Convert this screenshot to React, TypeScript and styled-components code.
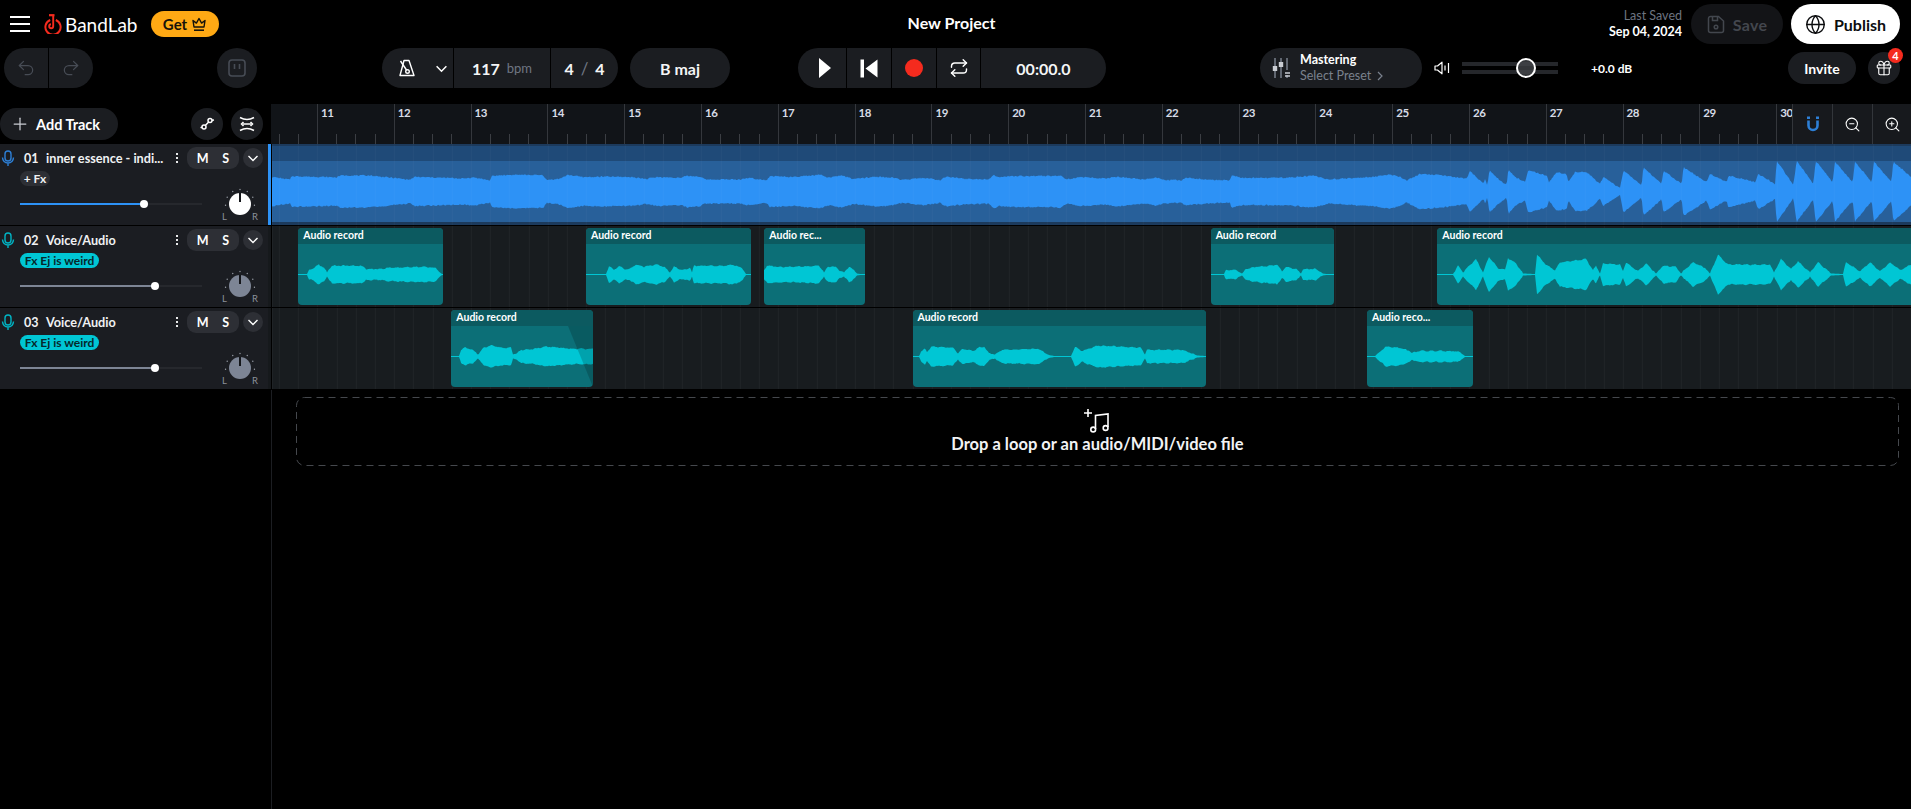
import * as React from "react";
import styled, { createGlobalStyle } from "styled-components";
import { Gift, Globe, Plus, Redo2, Repeat, Undo2, ZoomIn, ZoomOut } from "lucide-react";

const GlobalStyle = createGlobalStyle`
  html, body {
    margin: 0;
    padding: 0;
    background: #000;
    color: #fff;
    font-family: Lato, "Noto Sans", sans-serif;
  }
  * { box-sizing: border-box; }
`;

const BEAT = 19.2;
const BAR = BEAT * 4;
const FIRST_BAR_OFFSET = 45.3;

const Page = styled.div`
  width: 1911px;
  height: 809px;
  overflow: hidden;
  display: flex;
  flex-direction: column;
  background: #000;
`;

/* ---- top bar ---- */
const TopBar = styled.header`
  height: 48px;
  display: grid;
  grid-template-columns: 1fr auto 1fr;
  align-items: center;
  padding: 0 11px 0 10px;
`;

const BrandGroup = styled.div`
  display: flex;
  align-items: center;
`;

const Hamburger = styled.div`
  width: 20px;
  height: 16px;
  display: flex;
  flex-direction: column;
  justify-content: space-between;
  margin-right: 14px;
  span {
    display: block;
    height: 2px;
    background: #fff;
  }
`;

const BrandName = styled.span`
  font-size: 19px;
  font-weight: 400;
  margin-left: 3px;
  margin-right: 13px;
`;

const GetButton = styled.div`
  width: 68px;
  height: 26px;
  border-radius: 13px;
  background: #ffa914;
  color: #15120a;
  font-size: 15px;
  font-weight: 700;
  display: flex;
  align-items: center;
  justify-content: center;
  gap: 5px;
`;

const ProjectTitle = styled.div`
  font-size: 16px;
  font-weight: 700;
  margin: 0 7px 3px 0;
`;

const SaveGroup = styled.div`
  display: flex;
  align-items: center;
  justify-content: flex-end;
`;

const LastSaved = styled.div`
  text-align: right;
  font-size: 12.5px;
  font-weight: 700;
  line-height: 16px;
  margin-right: 9px;
  span {
    display: block;
    color: #6d7480;
    font-weight: 400;
  }
`;

const SaveButton = styled.div`
  width: 92px;
  height: 40px;
  border-radius: 20px;
  background: #131417;
  color: #43474e;
  font-size: 16px;
  letter-spacing: 0.3px;
  font-weight: 700;
  display: flex;
  align-items: center;
  justify-content: center;
  gap: 8px;
  margin-right: 8px;
`;

const PublishButton = styled.div`
  width: 109px;
  height: 40px;
  border-radius: 20px;
  background: #fff;
  color: #0c0d0f;
  font-size: 16px;
  font-weight: 700;
  display: flex;
  align-items: center;
  justify-content: center;
  gap: 8px;
`;

/* ---- transport toolbar ---- */
const Toolbar = styled.div`
  height: 40px;
  display: flex;
  align-items: center;
  padding: 0 11px 0 4px;
  margin-bottom: 16px;
`;

const Pill = styled.div<{ $ml?: number }>`
  height: 40px;
  display: flex;
  align-items: stretch;
  border-radius: 20px;
  background: #1b1d21;
  overflow: hidden;
  margin-left: ${(p) => p.$ml ?? 0}px;
  flex: none;
`;

const PillCell = styled.div<{ $w: number; $last?: boolean }>`
  width: ${(p) => p.$w}px;
  display: flex;
  align-items: center;
  justify-content: center;
  gap: 7px;
  border-right: ${(p) => (p.$last ? "none" : "1px solid #000")};
  font-size: 16px;
  font-weight: 700;
  color: #f4f5f6;
`;

const MetronomeCell = styled(PillCell)`
  justify-content: flex-start;
  padding-left: 16px;
  gap: 19px;
`;

const PlayCell = styled(PillCell)`
  padding-left: 6px;
`;

const Dim = styled.span`
  color: #6f7683;
  font-size: 13px;
  font-weight: 400;
`;

const Slash = styled(Dim)`
  font-size: 17px;
`;

const MasteringPill = styled(Pill)`
  width: 162px;
  padding-left: 12px;
  align-items: center;
  gap: 8px;
`;

const MasteringText = styled.div`
  font-size: 12.5px;
  font-weight: 700;
  line-height: 16px;
`;

const PresetLine = styled.span`
  display: flex;
  align-items: center;
  gap: 6px;
  color: #7a818d;
  font-weight: 400;
`;

const VolumeGroup = styled.div`
  display: flex;
  align-items: center;
  margin-left: 12px;
`;

const VolumeTrack = styled.div`
  position: relative;
  width: 96px;
  height: 12px;
  margin-left: 11px;
  border-top: 4px solid #25272b;
  border-bottom: 4px solid #25272b;
`;

const VolumeThumb = styled.div`
  position: absolute;
  left: 54px;
  top: -8px;
  width: 20px;
  height: 20px;
  border-radius: 50%;
  border: 2px solid #fff;
  background: rgba(70, 72, 76, 0.75);
`;

const DbLabel = styled.span`
  font-size: 12px;
  font-weight: 700;
  margin-left: 33px;
`;

const RightActions = styled.div`
  margin-left: auto;
  display: flex;
  align-items: center;
`;

const InviteButton = styled.div`
  width: 68px;
  height: 32px;
  border-radius: 16px;
  background: #1b1d21;
  font-size: 14px;
  font-weight: 700;
  display: flex;
  align-items: center;
  justify-content: center;
`;

const RoundButton = styled.div<{ $size?: number; $dim?: boolean }>`
  position: relative;
  width: ${(p) => p.$size ?? 32}px;
  height: ${(p) => p.$size ?? 32}px;
  border-radius: 50%;
  background: #1b1d21;
  color: ${(p) => (p.$dim ? "#474c55" : "#fff")};
  display: flex;
  align-items: center;
  justify-content: center;
  flex: none;
`;

const GiftButton = styled(RoundButton)`
  margin-left: 12px;
`;

const Badge = styled.span`
  position: absolute;
  top: -4px;
  right: -3px;
  width: 15px;
  height: 15px;
  border-radius: 50%;
  background: #f52b1e;
  font-size: 11px;
  font-weight: 700;
  display: flex;
  align-items: center;
  justify-content: center;
`;

const PauseSlot = styled(RoundButton)`
  margin-left: 124px;
  width: 40px;
  height: 40px;
`;

/* ---- ruler row ---- */
const RulerRow = styled.div`
  height: 40px;
  display: flex;
`;

const RulerSide = styled.div`
  width: 271px;
  display: flex;
  align-items: center;
  padding-right: 8px;
  gap: 8px;
`;

const AddTrackButton = styled.div`
  width: 118px;
  height: 32px;
  border-radius: 16px;
  background: #1b1d21;
  display: flex;
  align-items: center;
  padding-left: 10px;
  gap: 6px;
  font-size: 14.5px;
  font-weight: 700;
  margin-right: auto;
`;

const Ruler = styled.div`
  position: relative;
  flex: 1;
  display: flex;
  overflow: hidden;
  background: #111418;
`;

const tickFill = "linear-gradient(#3b3e43, #3b3e43)";

const LeadIn = styled.div`
  flex: none;
  width: 46px;
  background-image: ${tickFill}, ${tickFill};
  background-size: 1px 10px;
  background-repeat: no-repeat;
  background-position: ${46 - BEAT * 2}px bottom, ${46 - BEAT}px bottom;
`;

const BarCell = styled.div`
  flex: none;
  width: ${BAR}px;
  border-left: 1px solid #34373c;
  padding: 2px 0 0 3px;
  font-size: 11.5px;
  font-weight: 700;
  letter-spacing: -0.4px;
  color: #d7dce6;
  background-image: ${tickFill}, ${tickFill}, ${tickFill};
  background-size: 1px 10px;
  background-repeat: no-repeat;
  background-position: ${BEAT - 1}px bottom, ${BEAT * 2 - 1}px bottom, ${BEAT * 3 - 1}px bottom;
`;

const RulerTools = styled.div`
  position: absolute;
  right: 0;
  top: 0;
  bottom: 0;
  display: flex;
  background: #17191d;
`;

const RulerTool = styled.div<{ $blue?: boolean }>`
  width: 40px;
  display: flex;
  align-items: center;
  justify-content: center;
  border-left: 1px solid #33363b;
  color: ${(p) => (p.$blue ? "#2d7fd6" : "#fff")};
  &:last-child {
    width: 39px;
  }
`;

/* ---- tracks ---- */
const TrackRow = styled.div`
  height: 81px;
  margin-bottom: 1px;
  display: flex;
`;

const TrackHead = styled.div<{ $accent?: boolean }>`
  width: 271px;
  margin-right: 1px;
  flex: none;
  background: #1b1d22;
  padding-top: 3px;
  border-right: 3px solid ${(p) => (p.$accent ? "#2d92f6" : "#16191c")};
`;

const HeadLine = styled.div`
  height: 22px;
  display: flex;
  align-items: center;
  padding-left: 1px;
`;

const MicSlot = styled.div<{ $color: string }>`
  width: 14px;
  display: flex;
  justify-content: center;
  color: ${(p) => p.$color};
  margin-right: 9px;
`;

const TrackNo = styled.span`
  width: 22px;
  font-size: 12.5px;
  font-weight: 700;
  color: #f0f1f3;
`;

const TrackName = styled.span`
  width: 126px;
  font-size: 12.7px;
  font-weight: 700;
  color: #f0f1f3;
  white-space: nowrap;
`;

const Kebab = styled.div`
  width: 10px;
  display: flex;
  flex-direction: column;
  align-items: center;
  gap: 2px;
  margin-right: 5px;
  i {
    width: 2px;
    height: 2px;
    background: #e8e9ea;
    display: block;
  }
`;

const MuteSolo = styled.div`
  width: 52px;
  height: 22px;
  border-radius: 9px;
  background: #2d2f35;
  display: flex;
  align-items: center;
  justify-content: space-around;
  padding: 0 3px;
  font-size: 12.5px;
  font-weight: 700;
`;

const Collapse = styled.div`
  width: 20px;
  height: 20px;
  margin-left: 4px;
  border-radius: 50%;
  background: #2d2f35;
  display: flex;
  align-items: center;
  justify-content: center;
`;

const FxChip = styled.div<{ $active?: boolean }>`
  height: 15.5px;
  width: ${(p) => (p.$active ? 79 : 30)}px;
  margin: 1.5px 0 0 20px;
  border-radius: 8px;
  background: ${(p) => (p.$active ? "#00c6d4" : "#2d2f35")};
  color: ${(p) => (p.$active ? "#06282c" : "#f0f1f3")};
  font-size: 12px;
  font-weight: 700;
  text-align: center;
  line-height: 15px;
  white-space: nowrap;
`;

const MixLine = styled.div`
  height: 36px;
  display: flex;
  align-items: center;
  padding-left: 20px;
`;

const Fader = styled.div`
  position: relative;
  width: 182px;
  height: 2px;
  background: #26282d;
`;

const FaderFill = styled.div<{ $pos: number; $color: string }>`
  width: ${(p) => p.$pos}px;
  height: 100%;
  background: ${(p) => p.$color};
`;

const FaderThumb = styled.div<{ $pos: number }>`
  position: absolute;
  top: -3px;
  left: ${(p) => p.$pos - 4}px;
  width: 8px;
  height: 8px;
  border-radius: 50%;
  background: #fff;
`;

const KnobWrap = styled.div`
  position: relative;
  width: 36px;
  height: 36px;
  margin-left: 20px;
  display: flex;
  align-items: center;
  justify-content: center;
`;

const KnobTicks = styled.svg`
  position: absolute;
  inset: 0;
`;

const KnobDial = styled.div<{ $color: string }>`
  position: relative;
  width: 22px;
  height: 22px;
  border-radius: 50%;
  background: ${(p) => p.$color};
  &::after {
    content: "";
    position: absolute;
    left: 10px;
    top: 0;
    width: 2px;
    height: 9px;
    background: #14161a;
  }
`;

const KnobSide = styled.span<{ $side: "left" | "right" }>`
  position: absolute;
  bottom: 0;
  ${(p) => p.$side}: 0;
  font-size: 9.5px;
  line-height: 10px;
  color: #8c919a;
`;

const Lane = styled.div`
  position: relative;
  flex: 1;
  overflow: hidden;
  background-color: #181c1f;
  background-image: repeating-linear-gradient(
    to right,
    rgba(255, 255, 255, 0.035) 0 1px,
    transparent 1px ${BEAT}px
  );
  background-position-x: ${FIRST_BAR_OFFSET % BEAT}px;
`;

const GridVeil = styled.div`
  position: absolute;
  inset: 0;
  pointer-events: none;
  background-image: repeating-linear-gradient(
    to right,
    rgba(255, 255, 255, 0.025) 0 1px,
    transparent 1px ${BEAT}px
  );
  background-position-x: ${FIRST_BAR_OFFSET % BEAT}px;
`;

const FullRegion = styled.div`
  height: 100%;
  display: flex;
  flex-direction: column;
  background: #1c3a5c;
  padding: 2px 0 3px;
`;

const FullRegionTop = styled.div`
  height: 16px;
  background: #1f4a78;
`;

const FullRegionBody = styled.div`
  flex: 1;
  background: #28609a;
`;

const Clip = styled.div<{ $x: number; $w: number }>`
  position: absolute;
  left: ${(p) => p.$x}px;
  top: 2px;
  width: ${(p) => p.$w}px;
  height: 77px;
  border-radius: 4px;
  overflow: hidden;
  background: #0c6f77;
`;

const ClipTitle = styled.div`
  height: 16px;
  background: #0c5a60;
  color: #fff;
  font-size: 10.5px;
  font-weight: 700;
  padding-left: 5px;
  line-height: 15px;
  white-space: nowrap;
`;

const Fade = styled.svg`
  position: absolute;
  right: 0;
  top: 16px;
`;

const WaveSvg = styled.svg`
  display: block;
`;

/* ---- empty area ---- */
const LowerArea = styled.div`
  flex: 1;
  display: flex;
`;

const LowerSide = styled.div`
  width: 272px;
  border-right: 1px solid #1c1e22;
`;

const DropZone = styled.div`
  position: relative;
  width: 1603px;
  height: 69px;
  margin: 7px 0 0 24px;
  display: flex;
  flex-direction: column;
  align-items: center;
  justify-content: flex-start;
  padding-top: 11px;
  font-size: 16.5px;
  font-weight: 700;
  color: #f2f3f4;
`;

const DropOutline = styled.svg`
  position: absolute;
  inset: 0;
`;

/* ---- waveforms ---- */
type Anchor = [number, number];

const noise = (i: number, seed: number) => {
  const s = Math.sin(i * 12.9898 + seed * 78.233) * 43758.5453;
  return s - Math.floor(s);
};

const interp = (anchors: Anchor[], x: number) => {
  for (let i = 1; i < anchors.length; i++) {
    if (x <= anchors[i][0]) {
      const [x0, h0] = anchors[i - 1];
      const [x1, h1] = anchors[i];
      return h0 + (h1 - h0) * ((x - x0) / (x1 - x0 || 1));
    }
  }
  return anchors[anchors.length - 1][1];
};

const wavePoints = (width: number, center: number, fn: (x: number) => number, jitter: number, seed: number) => {
  const top: string[] = [];
  const bottom: string[] = [];
  for (let x = 0; x <= width; x++) {
    const h = fn(x);
    const amt = h > 2 ? jitter : 0;
    top.push(`${x},${(center - h - (noise(x, seed) - 0.5) * amt).toFixed(1)}`);
    bottom.unshift(`${x},${(center + h + (noise(x, seed + 3) - 0.5) * amt).toFixed(1)}`);
  }
  return [...top, ...bottom].join(" ");
};

const ClipWave = ({ anchors, width, seed }: { anchors: Anchor[]; width: number; seed: number }) => {
  const envelope = (x: number) => {
    const h = interp(anchors, x);
    return h > 2 ? h * 1.1 + 0.4 * Math.sin(x * 0.7 + seed) : h;
  };
  return (
    <WaveSvg width={width} height={61}>
      <polygon points={wavePoints(width, 30.5, envelope, 0.8, seed)} fill="#00c6d4" />
    </WaveSvg>
  );
};

const LANE_W = 1639;

// envelope of the mixdown: [x in lane, half height], read off crop rows
const fromCrop = (x0: number, mid: number, rows: number[][]): Anchor[] =>
  rows.map(([px, y]) => [x0 + px / 3 - 272, (mid - y) / 3]);

// the steady part of the song sits flatter than the raw readings
const flatten = (rows: Anchor[]): Anchor[] => rows.map(([x, h]) => [x, 14.5 + (h - 14.5) * 0.7]);

const masterAnchors: Anchor[] = [
  ...flatten(fromCrop(260, 272, [
    [36, 228], [90, 240], [95, 225], [230, 230], [240, 222], [330, 222], [450, 240], [465, 228],
    [610, 235], [640, 230], [690, 243], [695, 225],
  ])),
  ...flatten(fromCrop(500, 95, [
    [0, 44], [50, 42], [130, 44], [140, 65], [180, 58], [205, 42], [250, 52], [320, 50], [400, 52],
    [437, 60], [470, 52], [545, 55], [560, 46], [600, 50], [615, 62], [720, 62], [745, 55], [800, 65],
    [810, 47], [880, 52], [960, 42], [985, 55], [1025, 45], [1060, 60], [1130, 50], [1180, 55],
    [1210, 65], [1270, 55], [1320, 65], [1340, 50], [1400, 60], [1465, 62], [1480, 42],
  ])),
  ...flatten(fromCrop(1000, 95, [
    [0, 52], [30, 48], [160, 47], [180, 44], [200, 62], [240, 52], [320, 58], [350, 50], [430, 62],
    [470, 54], [490, 63], [545, 66], [555, 55], [640, 64], [690, 65], [695, 42], [720, 55], [860, 55],
    [940, 45], [985, 63], [1060, 55], [1130, 50], [1165, 40], [1200, 50],
  ])),
  ...fromCrop(1400, 158, [
    [0, 115], [20, 125], [60, 105], [130, 110], [200, 120], [210, 97], [250, 135], [255, 122], [262, 140],
    [268, 95], [300, 125], [320, 138], [325, 90], [345, 115], [375, 130], [385, 95], [440, 110], [447, 130],
    [470, 100], [500, 105], [505, 130], [525, 100], [560, 100], [600, 135], [610, 115], [660, 148],
    [670, 95], [725, 140], [730, 85], [785, 135], [790, 95], [845, 135], [850, 85], [920, 130],
    [930, 105], [980, 130], [985, 110], [1065, 130], [1075, 105], [1125, 135], [1130, 66], [1180, 138],
    [1190, 66], [1240, 135], [1247, 66], [1298, 130], [1305, 68], [1358, 130], [1365, 68], [1415, 130],
    [1422, 68], [1474, 130], [1480, 68], [1533, 115],
  ]),
];

const MasterWave = () => (
  <WaveSvg width={LANE_W} height={61}>
    <polygon points={wavePoints(LANE_W, 30.5, (x) => interp(masterAnchors, x), 1.3, 7)} fill="#2d92f6" />
  </WaveSvg>
);

const clipsA: { x: number; w: number; title: string; anchors: Anchor[] }[] = [
  {
    x: 298.3, w: 144.4, title: "Audio record",
    anchors: [[0, 0.5], [9, 0.5], [11, 4], [16, 6], [21, 9], [26, 6], [29, 2], [31, 5], [34, 8], [60, 8], [66, 7], [68, 5], [85, 5], [88, 6], [128, 7], [138, 6], [142, 2], [144, 0.5], [145, 0.5]],
  },
  {
    x: 586, w: 164.7, title: "Audio record",
    anchors: [[0, 0.5], [20, 0.5], [23, 8], [28, 4], [33, 8], [38, 5], [44, 5], [50, 9], [58, 7], [70, 9], [78, 7], [84, 2], [88, 7], [93, 5], [98, 4], [104, 6], [106, 2], [108, 8], [140, 8], [146, 9], [156, 6], [160, 0.5], [165, 0.5]],
  },
  {
    x: 764.3, w: 100.4, title: "Audio rec...",
    anchors: [[0, 4], [3, 8], [15, 7], [30, 7], [55, 8], [56, 7], [60, 2], [64, 7], [72, 7], [76, 3], [80, 2], [85, 7], [90, 4], [93, 1], [96, 0.5], [101, 0.5]],
  },
  {
    x: 1210.7, w: 122.9, title: "Audio record",
    anchors: [[0, 0.5], [13, 0.5], [15, 4], [25, 4], [31, 1], [35, 5], [45, 7], [60, 8], [66, 9], [71, 3], [75, 7], [85, 5], [90, 1], [92, 5], [105, 5], [112, 1], [115, 0.5], [123, 0.5]],
  },
  {
    x: 1437.3, w: 480, title: "Audio record",
    anchors: [[0, 0.5], [16, 0.5], [21, 8], [26, 2], [39, 14], [46, 2], [52, 16], [61, 6], [68, 4], [71, 15], [79, 10], [86, 1], [98, 0.5], [100, 18], [109, 9], [118, 4], [123, 11], [149, 14], [156, 4], [159, 8], [163, 1], [166, 10], [183, 9], [186, 3], [189, 11], [201, 3], [209, 10], [219, 1], [226, 8], [239, 7], [244, 1], [256, 11], [268, 6], [273, 1], [281, 18], [291, 9], [313, 9], [333, 9], [337, 2], [344, 14], [354, 5], [361, 12], [373, 2], [381, 11], [394, 1], [406, 0.5], [409, 11], [423, 3], [433, 11], [443, 3], [453, 11], [463, 4], [474, 9]],
  },
];

const clipsB: { x: number; w: number; title: string; anchors: Anchor[]; fade?: boolean }[] = [
  {
    x: 451.3, w: 141.4, title: "Audio record", fade: true,
    anchors: [[0, 0.5], [8, 0.5], [10, 6], [14, 8], [22, 6], [27, 2], [33, 8], [40, 10], [50, 8], [60, 8], [62, 2], [66, 3], [70, 6], [86, 7], [88, 8], [95, 9], [120, 7], [142, 7]],
  },
  {
    x: 912.5, w: 293.2, title: "Audio record",
    anchors: [[0, 0.5], [6, 0.5], [8, 5], [12, 7], [14, 4], [18, 9], [40, 8], [45, 3], [50, 7], [60, 5], [66, 8], [71, 9], [76, 3], [82, 2], [89, 6], [125, 7], [136, 1.5], [141, 0.5], [158, 0.5], [162, 9], [169, 5], [185, 10], [228, 8], [232, 2], [234, 6], [270, 6], [284, 1], [293, 0.5]],
  },
  {
    x: 1367, w: 106.3, title: "Audio reco...",
    anchors: [[0, 0.5], [8, 0.5], [11, 3], [19, 9], [33, 8], [43, 5], [45, 3], [51, 5], [87, 5], [93, 4], [98, 0.5], [107, 0.5]],
  },
];

/* ---- drawn icons ---- */
const BandLabLogo = () => (
  <svg width="18" height="20" viewBox="0 0 18 20" fill="none" stroke="#f52b1e">
    <path d="M5 1.2h5.5" strokeWidth="2.2" />
    <path d="M6.2 6a7.6 7.6 0 1 0 5.6 0" strokeWidth="2" />
    <path d="M9.2 1.5v10.8a2 2 0 1 1-2.2-2" strokeWidth="1.9" />
  </svg>
);

const CrownIcon = () => (
  <svg width="14" height="15" viewBox="0 0 14 15" fill="none" stroke="#15120a" strokeWidth="1.4">
    <path d="M2 10 1 3.5l3.4 2.6L7 1.5l2.6 4.6L13 3.5 12 10Z" strokeLinejoin="round" />
    <path d="M2 13.2h10" strokeWidth="1.6" />
  </svg>
);

const MetronomeIcon = () => (
  <svg width="18" height="18" viewBox="0 0 18 18" fill="none" stroke="#fff" strokeWidth="1.4" strokeLinejoin="round">
    <path d="M6 1.5h5l5 15H2Z" />
    <path d="M2.5 2 9.5 12.5" />
    <circle cx="9.5" cy="12.5" r="1.8" fill="#1b1d21" />
  </svg>
);

const LoopSlotIcon = () => (
  <svg width="20" height="20" viewBox="0 0 20 20" fill="none" stroke="currentColor" strokeWidth="1.6">
    <rect x="2" y="2" width="16" height="16" rx="3" />
    <path d="M7.5 6v5M12.5 6v5" />
  </svg>
);

const FloppyIcon = () => (
  <svg width="18" height="19" viewBox="0 0 18 19" fill="none" stroke="currentColor" strokeWidth="1.5">
    <path d="M3.5 1.5h8l5 4.5v9.5a2 2 0 0 1-2 2h-11a2 2 0 0 1-2-2v-12a2 2 0 0 1 2-2Z" />
    <path d="M5.5 1.5v4h5v-4" />
    <circle cx="9" cy="12" r="1.8" />
  </svg>
);

const PlayIcon = () => (
  <svg width="14" height="20" viewBox="0 0 14 20">
    <path d="M1 0 13 10 1 20Z" fill="#fff" />
  </svg>
);

const BackIcon = () => (
  <svg width="18" height="19" viewBox="0 0 18 19" fill="#fff">
    <rect x="0.5" y="0.5" width="3.5" height="18" />
    <path d="M17.5 0.5v18L5.5 9.5Z" />
  </svg>
);

const RecordDot = styled.div`
  width: 18px;
  height: 18px;
  border-radius: 50%;
  background: #f52b1e;
`;

const MasterSlidersIcon = () => (
  <svg width="20" height="24" viewBox="0 0 20 24" fill="none" strokeWidth="1.5">
    <path d="M3 2v8M3 15v7M9 2v4M9 11v11M15 2v12M15 19v3" stroke="#7a818d" />
    <rect x="0.8" y="10" width="4.4" height="5" fill="#c9ccd2" />
    <rect x="6.8" y="6" width="4.4" height="5" fill="#c9ccd2" />
    <path d="M13 17h5M13 20h5" stroke="#c9ccd2" />
  </svg>
);

const PresetChevron = () => (
  <svg width="6" height="10" viewBox="0 0 6 10" fill="none" stroke="#7a818d" strokeWidth="1.2">
    <path d="M1 1l4 4-4 4" />
  </svg>
);

const SpeakerIcon = () => (
  <svg width="17" height="14" viewBox="0 0 17 14" fill="none" stroke="#fff" strokeWidth="1.2">
    <path d="M1 5h2.5L8 1.2v11.6L3.5 9H1Z" strokeLinejoin="round" />
    <path d="M11 4.5v5M14.5 2v10" />
  </svg>
);

const MagnetIcon = () => (
  <svg width="14" height="16" viewBox="0 0 14 16" fill="none" stroke="currentColor">
    <path d="M2.5 0.5v2.5M11.5 0.5v2.5" strokeWidth="3" />
    <path d="M2.5 4.5V9.5a4.5 4.5 0 0 0 9 0V4.5" strokeWidth="2.6" />
  </svg>
);

const AutomationIcon = () => (
  <svg width="16" height="16" viewBox="0 0 16 16" fill="none" stroke="#fff" strokeWidth="1.5">
    <circle cx="5" cy="11" r="2" />
    <circle cx="11" cy="4.5" r="2" />
    <path d="M6.3 9.5 9.7 6M1.5 11.6 3 11.2M13 4.3 15 4" />
  </svg>
);

const TempoFitIcon = () => (
  <svg width="16" height="16" viewBox="0 0 16 16" fill="none" stroke="#fff" strokeWidth="1.5">
    <path d="M1 1.5Q8 5.5 15 1.5M1 14.5Q8 10.5 15 14.5" />
    <path d="M4 8h8" />
    <path d="M4.5 6 2.5 8l2 2M11.5 6l2 2-2 2" />
  </svg>
);

const ChevronIcon = ({ size = 12 }: { size?: number }) => (
  <svg width={size} height={size} viewBox="0 0 12 12" fill="none" stroke="#fff" strokeWidth="1.4">
    <path d="M1.5 4 6 8.5 10.5 4" />
  </svg>
);

const MicIcon = () => (
  <svg width="14" height="17" viewBox="0 0 14 17" fill="none" stroke="currentColor" strokeWidth="1.4">
    <rect x="4" y="1" width="6" height="10" rx="3" />
    <path d="M1.5 7.5a5.5 5.5 0 0 0 11 0M7 13v3" />
  </svg>
);

const DropIcon = () => (
  <svg width="27" height="26" viewBox="0 0 27 26" fill="none" stroke="#fff" strokeWidth="1.6">
    <path d="M4 1v8M0 5h8" />
    <path d="M11.5 21V7.5L24 6v13" />
    <circle cx="9.2" cy="21.5" r="2.4" />
    <circle cx="21.6" cy="20" r="2.4" />
  </svg>
);

const tickAngles = [-95, -62, -30, 0, 30, 62, 95];

const Knob = ({ color }: { color: string }) => (
  <KnobWrap>
    <KnobTicks width="36" height="36" viewBox="0 0 36 36">
      {tickAngles.map((a) => (
        <circle
          key={a}
          cx={18 + 14.5 * Math.sin((a * Math.PI) / 180)}
          cy={18 - 14.5 * Math.cos((a * Math.PI) / 180)}
          r="0.7"
          fill="#9a9fa8"
        />
      ))}
    </KnobTicks>
    <KnobDial $color={color} />
    <KnobSide $side="left">L</KnobSide>
    <KnobSide $side="right">R</KnobSide>
  </KnobWrap>
);

const TrackControls = ({
  no, name, micColor, fx, fader, fillColor, knobColor,
}: {
  no: string; name: string; micColor: string; fx?: string; fader: number; fillColor: string; knobColor: string;
}) => (
  <>
    <HeadLine>
      <MicSlot $color={micColor}>
        <MicIcon />
      </MicSlot>
      <TrackNo>{no}</TrackNo>
      <TrackName>{name}</TrackName>
      <Kebab><i /><i /><i /></Kebab>
      <MuteSolo><span>M</span><span>S</span></MuteSolo>
      <Collapse><ChevronIcon /></Collapse>
    </HeadLine>
    <FxChip $active={!!fx}>{fx ?? "+ Fx"}</FxChip>
    <MixLine>
      <Fader>
        <FaderFill $pos={fader} $color={fillColor} />
        <FaderThumb $pos={fader} />
      </Fader>
      <Knob color={knobColor} />
    </MixLine>
  </>
);

const barNumbers = Array.from({ length: 20 }, (_, i) => i + 11);

export default function App() {
  return (
    <Page>
      <GlobalStyle />
      <TopBar>
        <BrandGroup>
          <Hamburger><span /><span /><span /></Hamburger>
          <BandLabLogo />
          <BrandName>BandLab</BrandName>
          <GetButton>Get <CrownIcon /></GetButton>
        </BrandGroup>
        <ProjectTitle>New Project</ProjectTitle>
        <SaveGroup>
          <LastSaved><span>Last Saved</span>Sep 04, 2024</LastSaved>
          <SaveButton><FloppyIcon />Save</SaveButton>
          <PublishButton><Globe size={21} strokeWidth={1.6} />Publish</PublishButton>
        </SaveGroup>
      </TopBar>

      <Toolbar>
        <Pill>
          <PillCell $w={45}><Undo2 size={20} strokeWidth={1.5} color="#474c55" /></PillCell>
          <PillCell $w={44} $last><Redo2 size={20} strokeWidth={1.5} color="#474c55" /></PillCell>
        </Pill>
        <PauseSlot $dim><LoopSlotIcon /></PauseSlot>
        <Pill $ml={125}>
          <MetronomeCell $w={72}>
            <MetronomeIcon />
            <ChevronIcon size={13} />
          </MetronomeCell>
          <PillCell $w={97}>117 <Dim>bpm</Dim></PillCell>
          <PillCell $w={67} $last>4 <Slash>/</Slash> 4</PillCell>
        </Pill>
        <Pill $ml={12}>
          <PillCell $w={100} $last>B maj</PillCell>
        </Pill>
        <Pill $ml={68}>
          <PlayCell $w={49}><PlayIcon /></PlayCell>
          <PillCell $w={45}><BackIcon /></PillCell>
          <PillCell $w={45}><RecordDot /></PillCell>
          <PillCell $w={44}><Repeat size={20} strokeWidth={1.7} color="#fff" /></PillCell>
          <PillCell $w={125} $last>00:00.0</PillCell>
        </Pill>
        <MasteringPill $ml={154}>
          <MasterSlidersIcon />
          <MasteringText>Mastering<PresetLine>Select Preset <PresetChevron /></PresetLine></MasteringText>
        </MasteringPill>
        <VolumeGroup>
          <SpeakerIcon />
          <VolumeTrack><VolumeThumb /></VolumeTrack>
          <DbLabel>+0.0 dB</DbLabel>
        </VolumeGroup>
        <RightActions>
          <InviteButton>Invite</InviteButton>
          <GiftButton>
            <Gift size={18} strokeWidth={1.5} />
            <Badge>4</Badge>
          </GiftButton>
        </RightActions>
      </Toolbar>

      <RulerRow>
        <RulerSide>
          <AddTrackButton><Plus size={20} strokeWidth={1.5} color="#c9ccd2" />Add Track</AddTrackButton>
          <RoundButton><AutomationIcon /></RoundButton>
          <RoundButton><TempoFitIcon /></RoundButton>
        </RulerSide>
        <Ruler>
          <LeadIn />
          {barNumbers.map((n) => <BarCell key={n}>{n}</BarCell>)}
          <RulerTools>
            <RulerTool $blue><MagnetIcon /></RulerTool>
            <RulerTool><ZoomOut size={17} strokeWidth={1.5} /></RulerTool>
            <RulerTool><ZoomIn size={17} strokeWidth={1.5} /></RulerTool>
          </RulerTools>
        </Ruler>
      </RulerRow>

      <TrackRow>
        <TrackHead $accent>
          <TrackControls no="01" name="inner essence - indi..." micColor="#2d7fd6" fader={124} fillColor="#2d92f6" knobColor="#ffffff" />
        </TrackHead>
        <Lane>
          <FullRegion>
            <FullRegionTop />
            <FullRegionBody><MasterWave /></FullRegionBody>
          </FullRegion>
          <GridVeil />
        </Lane>
      </TrackRow>

      <TrackRow>
        <TrackHead>
          <TrackControls no="02" name="Voice/Audio" micColor="#00b4c4" fx="Fx Ej is weird" fader={135} fillColor="#7d8595" knobColor="#7d8595" />
        </TrackHead>
        <Lane>
          {clipsA.map((c, i) => (
            <Clip key={c.x} $x={c.x - 272} $w={c.w}>
              <ClipTitle>{c.title}</ClipTitle>
              <ClipWave anchors={c.anchors} width={Math.ceil(c.w)} seed={i + 1} />
            </Clip>
          ))}
        </Lane>
      </TrackRow>

      <TrackRow>
        <TrackHead>
          <TrackControls no="03" name="Voice/Audio" micColor="#00b4c4" fx="Fx Ej is weird" fader={135} fillColor="#7d8595" knobColor="#7d8595" />
        </TrackHead>
        <Lane>
          {clipsB.map((c, i) => (
            <Clip key={c.x} $x={c.x - 272} $w={c.w}>
              <ClipTitle>{c.title}</ClipTitle>
              <ClipWave anchors={c.anchors} width={Math.ceil(c.w)} seed={i + 11} />
              {c.fade && (
                <Fade width="25" height="61" viewBox="0 0 25 61">
                  <polygon points="0,0 25,0 25,61" fill="rgba(0,0,0,0.18)" />
                </Fade>
              )}
            </Clip>
          ))}
        </Lane>
      </TrackRow>

      <LowerArea>
        <LowerSide />
        <DropZone>
          <DropOutline width="1603" height="69">
            <rect x="0.5" y="0.5" width="1602" height="68" rx="8" fill="none" stroke="#45484d" strokeDasharray="7 5" />
          </DropOutline>
          <DropIcon />
          <span>Drop a loop or an audio/MIDI/video file</span>
        </DropZone>
      </LowerArea>
    </Page>
  );
}
